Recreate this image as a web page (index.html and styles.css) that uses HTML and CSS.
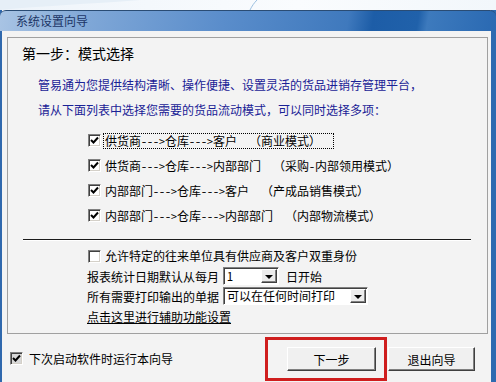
FILE: index.html
```html
<!DOCTYPE html>
<html lang="zh-CN">
<head>
    <meta charset="UTF-8">
    <title>系统设置向导</title>
    <link rel="stylesheet" href="styles.css">
</head>
<body>

<div class="desktop">
    <svg class="wallpaper" width="496" height="10" viewBox="0 0 496 10">
        <path d="M250 10 C252 6 254 3 257 0" stroke="#9cc0e0" stroke-width="1" fill="none"/>
        <path d="M0 10 C40 6 90 4 140 0 L0 0 Z" fill="#e6eff7"/>
    </svg>
</div>

<div class="window">
    <div class="titlebar"><span class="title">系统设置向导</span></div>

    <div class="client">
        <div class="group">
            <div class="step">第一步：模式选择</div>

            <p class="intro">管易通为您提供结构清晰、操作便捷、设置灵活的货品进销存管理平台，<br>请从下面列表中选择您需要的货品流动模式，可以同时选择多项：</p>

            <ul class="modes">
                <li>
                    <span class="check on"><svg width="11" height="11" viewBox="0 0 11 11"><path d="M2 5 L4.5 7.5 L9 2.5" stroke="#000" stroke-width="2" fill="none"/></svg></span>
                    <span class="label focus">供货商---&gt;仓库---&gt;客户  （商业模式）</span>
                </li>
                <li>
                    <span class="check on"><svg width="11" height="11" viewBox="0 0 11 11"><path d="M2 5 L4.5 7.5 L9 2.5" stroke="#000" stroke-width="2" fill="none"/></svg></span>
                    <span class="label">供货商---&gt;仓库---&gt;内部部门  （采购-内部领用模式）</span>
                </li>
                <li>
                    <span class="check on"><svg width="11" height="11" viewBox="0 0 11 11"><path d="M2 5 L4.5 7.5 L9 2.5" stroke="#000" stroke-width="2" fill="none"/></svg></span>
                    <span class="label">内部部门---&gt;仓库---&gt;客户  （产成品销售模式）</span>
                </li>
                <li>
                    <span class="check on"><svg width="11" height="11" viewBox="0 0 11 11"><path d="M2 5 L4.5 7.5 L9 2.5" stroke="#000" stroke-width="2" fill="none"/></svg></span>
                    <span class="label">内部部门---&gt;仓库---&gt;内部部门  （内部物流模式）</span>
                </li>
            </ul>

            <hr class="sep">

            <div class="options">
                <div class="row">
                    <span class="check"></span>
                    <span class="label">允许特定的往来单位具有供应商及客户双重身份</span>
                </div>
                <div class="row">
                    <span>报表统计日期默认从每月</span>
                    <span class="combo combo-day"><span class="value">1</span><span class="drop"><i></i></span></span>
                    <span class="after">日开始</span>
                </div>
                <div class="row">
                    <span>所有需要打印输出的单据</span>
                    <span class="combo combo-print"><span class="value">可以在任何时间打印</span><span class="drop"><i></i></span></span>
                </div>
                <div class="row">
                    <a class="link" href="#">点击这里进行辅助功能设置</a>
                </div>
            </div>
        </div>

        <div class="footer">
            <div class="startup">
                <span class="check on grey"><svg width="11" height="11" viewBox="0 0 11 11"><path d="M2 5 L4.5 7.5 L9 2.5" stroke="#000" stroke-width="2" fill="none"/></svg></span>
                <span>下次启动软件时运行本向导</span>
            </div>
            <div class="buttons">
                <button class="btn btn-next">下一步</button>
                <button class="btn btn-exit">退出向导</button>
                <div class="highlight"></div>
            </div>
        </div>
    </div>
</div>

</body>
</html>
```

FILE: styles.css
```css
body {
    margin: 0;
    width: 496px;
    height: 382px;
    overflow: hidden;
    font-family: "Noto Sans Mono CJK SC", "Noto Sans CJK SC", sans-serif;
    font-size: 12px;
    color: #000;
    background: #f4f8fc;
}

.desktop {
    height: 10px;
    background: linear-gradient(90deg, #eef4fa, #fafcfe 60%, #f2f7fb);
}

.wallpaper {
    display: block;
}

.window {
    border-left: 2px solid #2f68ad;
    border-right: 5px solid #2d6ab0;
    background: #f3f3f3;
    height: 372px;
}

.titlebar {
    height: 21px;
    margin-left: -2px;
    margin-right: -5px;
    border-top: 1px solid #2a4c74;
    border-radius: 6px 6px 0 0;
    box-sizing: border-box;
    background: linear-gradient(100deg, #a9c4e4 0%, #7fa7d7 18%, #5a8dcb 45%, #3f79bd 70%, #1d5da7 75%, #2061aa 84%, #3d7abd 86%, #2a69b2 100%);
}

.title {
    display: block;
    padding-left: 16px;
    line-height: 20px;
    color: #1c3566;
}

/* Группа "шаг 1" */
.group {
    margin: 6px 3px 0 5px;
    border: 1px solid #a0a0a0;
    padding: 6px 0 7px 0;
}

.step {
    padding-left: 14px;
    font-size: 14px;
    line-height: 18px;
}

.intro {
    margin: 10px 0 0 30px;
    line-height: 25px;
    color: #1a2296;
}

.modes {
    list-style: none;
    margin: 6px 0 0 80px;
    padding: 0;
}

.modes li {
    display: flex;
    align-items: center;
    height: 25px;
}

.label {
    white-space: pre;
    margin-left: 4px;
    line-height: 14px;
}

.focus {
    outline: 1px dotted #000;
    padding: 0 12px 0 1px;
    margin-left: 3px;
}

.check {
    display: inline-flex;
    align-items: center;
    justify-content: center;
    width: 13px;
    height: 13px;
    box-sizing: border-box;
    background: #fff;
    border: 1px solid;
    border-color: #808080 #fff #fff #808080;
    box-shadow: inset 1px 1px #404040, inset -1px -1px #d4d0c8;
}

.check svg {
    display: block;
}

.check.grey {
    background: #d8d8d8;
}

.sep {
    margin: 11px 16px 0 15px;
    border: 0;
    border-top: 1px solid #1a1a1a;
    border-bottom: 1px solid #fff;
    height: 0;
}

.options {
    margin: 5px 0 0 79px;
}

.options .row {
    display: flex;
    align-items: center;
    height: 20px;
}

.options .row .check {
    margin-left: 1px;
}

.combo {
    display: inline-flex;
    align-items: center;
    height: 18px;
    box-sizing: border-box;
    margin-left: 4px;
    background: #fff;
    border: 1px solid;
    border-color: #808080 #fff #fff #808080;
    box-shadow: inset 1px 1px #404040;
    padding: 1px 1px 1px 2px;
}

.combo-day {
    width: 56px;
}

.combo-print {
    width: 145px;
}

.combo .value {
    flex: 1;
    line-height: 14px;
    padding-left: 1px;
}

.drop {
    width: 16px;
    height: 14px;
    box-sizing: border-box;
    display: flex;
    align-items: center;
    justify-content: center;
    background: #ececec;
    border: 1px solid;
    border-color: #fff #404040 #404040 #fff;
    box-shadow: inset -1px -1px #808080;
}

.drop i {
    width: 0;
    height: 0;
    border-left: 4px solid transparent;
    border-right: 4px solid transparent;
    border-top: 4px solid #000;
    margin-top: 1px;
}

.after {
    margin-left: 7px;
}

.link {
    color: #000;
    text-decoration: underline;
}

/* Нижняя панель */
.footer {
    display: flex;
    align-items: center;
    height: 48px;
    padding-left: 8px;
}

.startup {
    display: flex;
    align-items: center;
    gap: 6px;
}

.buttons {
    position: relative;
    display: flex;
    gap: 12px;
    margin-left: auto;
    margin-right: 16px;
    margin-top: 2px;
}

.btn {
    height: 24px;
    font-family: inherit;
    font-size: 12px;
    background: #f0f0f0;
    border: 1px solid;
    border-color: #fff #404040 #404040 #fff;
    box-shadow: inset -1px -1px #808080;
    padding: 0;
}

.btn-next {
    width: 89px;
}

.btn-exit {
    width: 87px;
}

.highlight {
    position: absolute;
    left: -22px;
    top: -10px;
    width: 122px;
    height: 44px;
    box-sizing: border-box;
    border: 3px solid #cf1e1e;
}
```
